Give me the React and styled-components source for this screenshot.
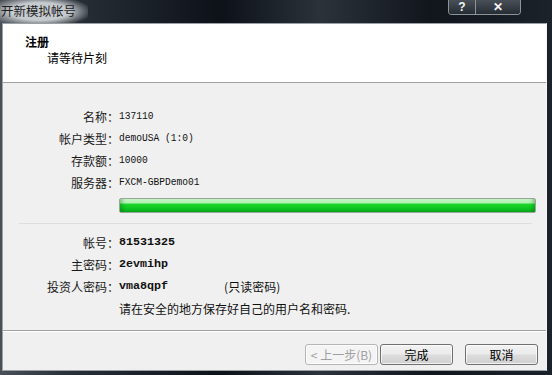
import React from "react";
import styled, { createGlobalStyle } from "styled-components";

const GlobalStyles = createGlobalStyle`
  html, body {
    margin: 0;
    padding: 0;
    background: #1b2129;
  }
`;

const cjk = `"Noto Sans CJK SC", "Liberation Sans", sans-serif`;
const mono = `"Liberation Mono", "Noto Sans CJK SC", monospace`;

const Window = styled.div`
  width: 552px;
  height: 375px;
  box-sizing: border-box;
  display: flex;
  flex-direction: column;
  padding: 0 5px 4px 2px;
  background: linear-gradient(90deg, #4a5058 0%, #2a3038 12%, #0d1219 40%, #2c323a 58%, #11161d 78%, #1c2229 100%);
  font-family: ${cjk};
`;

const TitleBar = styled.div`
  height: 23px;
  display: flex;
  align-items: flex-start;
  justify-content: space-between;
  flex-shrink: 0;
`;

const Title = styled.div`
  flex-shrink: 0;
  white-space: nowrap;
  height: 23px;
  box-sizing: border-box;
  padding: 3px 12px 0 1px;
  margin-left: -2px;
  font-size: 12.5px;
  line-height: 16px;
  color: #1e1e1e;
  background: radial-gradient(ellipse 60% 70% at 45% 50%, rgba(205, 210, 214, 0.95) 55%, rgba(205, 210, 214, 0) 100%);
`;

const CaptionButtons = styled.div`
  display: flex;
  margin-right: 26px;
  border: 1px solid #8d939a;
  border-top: none;
  border-radius: 0 0 4px 4px;
  overflow: hidden;
`;

const CaptionButton = styled.div`
  width: ${(p) => p.w}px;
  height: 14px;
  display: flex;
  align-items: center;
  justify-content: center;
  color: #f4f4f4;
  font-family: "Liberation Sans", sans-serif;
  font-weight: bold;
  font-size: 12px;
  background: linear-gradient(#4a5058, #262c34);
  & + & {
    border-left: 1px solid #8d939a;
  }
`;

const Client = styled.div`
  flex: 1;
  display: flex;
  flex-direction: column;
  background: #f0f0f0;
  border: 1px solid #9aa0a6;
  border-right-color: #f6f6f6;
`;

const Header = styled.div`
  height: 59px;
  background: #ffffff;
  border-bottom: 1px solid #a0a0a0;
  padding: 10px 0 0 22px;
  box-sizing: border-box;
  flex-shrink: 0;
`;

const HeaderTitle = styled.div`
  font-size: 12px;
  font-weight: bold;
  line-height: 15px;
  color: #000;
`;

const HeaderSub = styled.div`
  font-size: 12px;
  line-height: 15px;
  margin: 1px 0 0 22px;
  color: #000;
`;

const Body = styled.div`
  flex: 1;
  padding-top: 22px;
  display: flex;
  flex-direction: column;
`;

const Grid = styled.div`
  display: grid;
  grid-template-columns: 116px 1fr;
  grid-auto-rows: 22px;
  align-items: center;
`;

const Label = styled.div`
  text-align: right;
  font-size: 12px;
  color: #1a1a1a;
  white-space: nowrap;
`;

const Value = styled.div`
  font-family: ${(p) => (p.cjk ? cjk : mono)};
  font-size: ${(p) => (p.cjk ? 12 : 11.7)}px;
  font-weight: ${(p) => (p.bold ? "bold" : "normal")};
  color: #111;
  white-space: pre;
  display: flex;
  align-items: center;
`;

const Narrow = styled.span`
  display: inline-block;
  transform: scaleX(0.82);
  transform-origin: left center;
`;

const Note = styled.span`
  font-family: ${cjk};
  font-size: 12px;
  font-weight: normal;
  margin-left: 56px;
`;

const Progress = styled.div`
  margin: 5px 0 0 116px;
  width: 417px;
  height: 15px;
  box-sizing: border-box;
  border: 1px solid #9aa39c;
  border-radius: 2px;
  background: linear-gradient(#c4f7c4 0%, #b2f0b2 30%, #1cd62c 40%, #0bc420 75%, #09a61a 100%);
  box-shadow: inset 6px 0 4px -4px rgba(0, 80, 0, 0.35), inset -6px 0 4px -4px rgba(0, 80, 0, 0.35);
`;

const Rule = styled.div`
  height: 1px;
  margin: 10px 14px 7px 16px;
  background: #dedede;
`;

const Footer = styled.div`
  height: 40px;
  border-top: 1px solid #a0a0a0;
  box-shadow: inset 0 1px 0 #ffffff;
  display: flex;
  justify-content: flex-end;
  align-items: flex-start;
  padding: 13px 8px 0 0;
  box-sizing: border-box;
  flex-shrink: 0;
`;

const Button = styled.div`
  width: 73px;
  height: 21px;
  box-sizing: border-box;
  margin-left: ${(p) => p.gap}px;
  display: flex;
  align-items: center;
  justify-content: center;
  font-size: 12px;
  border-radius: 3px;
  border: 1px solid ${(p) => (p.disabled ? "#b5b5b5" : "#707070")};
  color: ${(p) => (p.disabled ? "#a0a0a0" : "#000")};
  background: ${(p) =>
    p.disabled
      ? "#f4f4f4"
      : "linear-gradient(#f2f2f2 0%, #ebebeb 48%, #dddddd 52%, #cfcfcf 100%)"};
  box-shadow: inset 0 0 0 1px rgba(255, 255, 255, 0.7);
`;

const topRows = [
  ["名称：", "137110"],
  ["帐户类型：", "demoUSA (1:0)"],
  ["存款额：", "10000"],
  ["服务器：", "FXCM-GBPDemo01"],
];

export default function App() {
  return (
    <>
      <GlobalStyles />
      <Window>
        <TitleBar>
          <Title>开新模拟帐号</Title>
          <CaptionButtons>
            <CaptionButton w={26}>?</CaptionButton>
            <CaptionButton w={44}>✕</CaptionButton>
          </CaptionButtons>
        </TitleBar>
        <Client>
          <Header>
            <HeaderTitle>注册</HeaderTitle>
            <HeaderSub>请等待片刻</HeaderSub>
          </Header>
          <Body>
            <Grid>
              {topRows.map(([k, v]) => (
                <React.Fragment key={k}>
                  <Label>{k}</Label>
                  <Value>
                    <Narrow>{v}</Narrow>
                  </Value>
                </React.Fragment>
              ))}
            </Grid>
            <Progress />
            <Rule />
            <Grid>
              <Label>帐号：</Label>
              <Value bold>81531325</Value>
              <Label>主密码：</Label>
              <Value bold>2evmihp</Value>
              <Label>投资人密码：</Label>
              <Value bold>
                vma8qpf<Note>(只读密码)</Note>
              </Value>
              <span />
              <Value cjk>请在安全的地方保存好自己的用户名和密码.</Value>
            </Grid>
          </Body>
          <Footer>
            <Button disabled gap={0}>&lt; 上一步(B)</Button>
            <Button gap={2}>完成</Button>
            <Button gap={12}>取消</Button>
          </Footer>
        </Client>
      </Window>
    </>
  );
}
